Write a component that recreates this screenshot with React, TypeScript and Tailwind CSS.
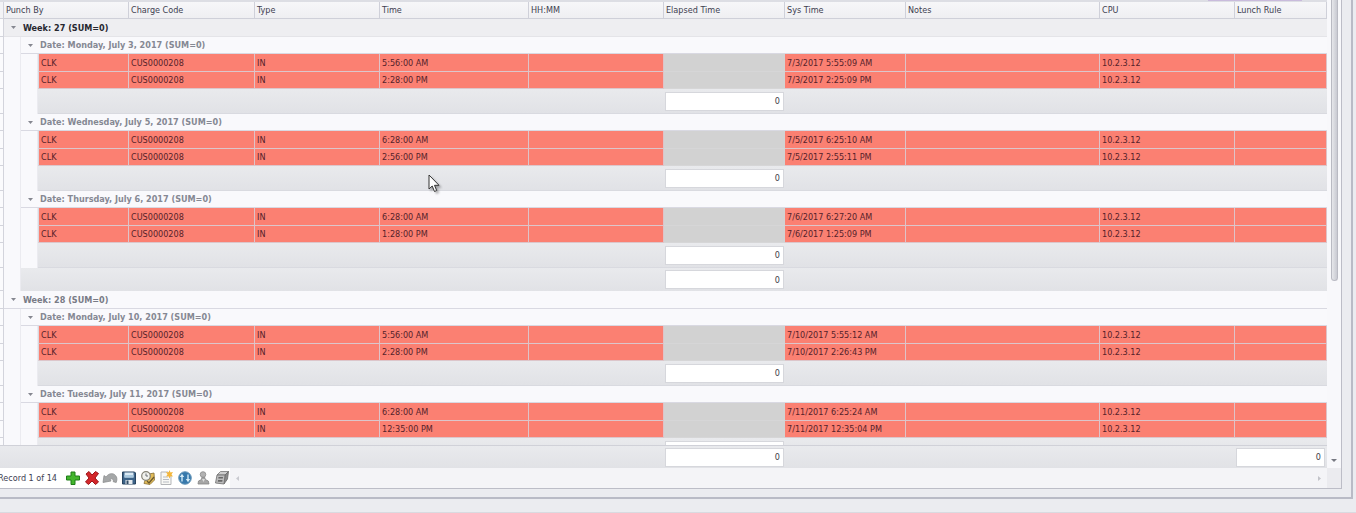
import { Fragment, type ReactNode } from "react";
import clsx from "clsx";

interface Punch {
  time: string;
  sysTime: string;
}

interface DayGroup {
  date: string;
  punches: Punch[];
}

interface WeekGroup {
  week: number;
  days: DayGroup[];
}

const WEEKS: WeekGroup[] = [
  {
    week: 27,
    days: [
      {
        date: "Monday, July 3, 2017",
        punches: [
          { time: "5:56:00 AM", sysTime: "7/3/2017 5:55:09 AM" },
          { time: "2:28:00 PM", sysTime: "7/3/2017 2:25:09 PM" },
        ],
      },
      {
        date: "Wednesday, July 5, 2017",
        punches: [
          { time: "6:28:00 AM", sysTime: "7/5/2017 6:25:10 AM" },
          { time: "2:56:00 PM", sysTime: "7/5/2017 2:55:11 PM" },
        ],
      },
      {
        date: "Thursday, July 6, 2017",
        punches: [
          { time: "6:28:00 AM", sysTime: "7/6/2017 6:27:20 AM" },
          { time: "1:28:00 PM", sysTime: "7/6/2017 1:25:09 PM" },
        ],
      },
    ],
  },
  {
    week: 28,
    days: [
      {
        date: "Monday, July 10, 2017",
        punches: [
          { time: "5:56:00 AM", sysTime: "7/10/2017 5:55:12 AM" },
          { time: "2:28:00 PM", sysTime: "7/10/2017 2:26:43 PM" },
        ],
      },
      {
        date: "Tuesday, July 11, 2017",
        punches: [
          { time: "6:28:00 AM", sysTime: "7/11/2017 6:25:24 AM" },
          { time: "12:35:00 PM", sysTime: "7/11/2017 12:35:04 PM" },
        ],
      },
    ],
  },
];

const HEADERS = [
  "Charge Code",
  "Type",
  "Time",
  "HH:MM",
  "Elapsed Time",
  "Sys Time",
  "Notes",
  "CPU",
  "Lunch Rule",
];

const TABLE = "w-full table-fixed border-separate border-spacing-0";
const BAR = "bg-linear-to-b from-[#e9eaed] to-[#e1e2e6]";

// Notes has no width, so it takes whatever the window leaves over
function Columns() {
  return (
    <colgroup>
      <col className="w-[4px]" />
      <col className="w-[17px]" />
      <col className="w-[17px]" />
      <col className="w-[91px]" />
      <col className="w-[126px]" />
      <col className="w-[125px]" />
      <col className="w-[149px]" />
      <col className="w-[135px]" />
      <col className="w-[121px]" />
      <col className="w-[121px]" />
      <col />
      <col className="w-[135px]" />
      <col className="w-[92px]" />
    </colgroup>
  );
}

function IndicatorCell() {
  return <td className="border-r border-b border-[#d3d4dc] bg-[#fbfbfd] p-0" />;
}

function IndentCell() {
  return <td className="border-r border-[#ebebf0] bg-[#f9f9fc] p-0" />;
}

function SumBox({ label }: { label: string }) {
  return (
    <input
      readOnly
      value="0"
      aria-label={label}
      className="block h-[19px] w-full border border-[#d6d7dc] bg-white pr-[3px] text-right text-[#3c3c48] outline-none"
    />
  );
}

function GroupTitle({ children }: { children: ReactNode }) {
  return (
    <button type="button" className="flex items-center whitespace-nowrap font-bold">
      <span className="flex w-[19px] justify-center pr-px">
        <svg viewBox="0 0 5 3" className="h-[3px] w-[5px]" fill="#858790">
          <path d="M0 0h5L2.5 3z" />
        </svg>
      </span>
      {children}
    </button>
  );
}

function PunchRow({ punch, first }: { punch: Punch; first: boolean }) {
  const cells = [
    "CLK",
    "CUS0000208",
    "IN",
    punch.time,
    "",
    null,
    punch.sysTime,
    "",
    "10.2.3.12",
    "",
  ];
  return (
    <tr className={first ? "h-[18px]" : "h-[17px]"}>
      <IndicatorCell />
      <IndentCell />
      <IndentCell />
      {cells.map((text, i) => (
        <td
          key={i}
          className={clsx(
            "overflow-hidden border-r border-b py-0 pr-0 pl-[2px] whitespace-nowrap text-[#55222a]",
            i === 0 && "border-l border-l-[#d9d9e0]",
            text === null
              ? "border-r-[#d3d3d3] border-b-[#d6d6d7] bg-[#d2d2d2]"
              : "border-r-[#dfc3c8] border-b-[#dcc6cb] bg-[#fb8072]",
          )}
        >
          {text}
        </td>
      ))}
    </tr>
  );
}

function WeekRows({ group, focused }: { group: WeekGroup; focused: boolean }) {
  return (
    <>
      <tr className="h-[18px]">
        <IndicatorCell />
        <td
          colSpan={12}
          className={clsx(
            "border-b p-0",
            focused
              ? "border-[#e4e4e8] bg-[#eeeef1] text-[#26272f]"
              : "border-[#d9d9e2] bg-[#f9f9fc] text-[#787b86]",
          )}
        >
          <GroupTitle>Week: {group.week} (SUM=0)</GroupTitle>
        </td>
      </tr>
      {group.days.map((day) => (
        <Fragment key={day.date}>
          <tr className="h-[17px]">
            <IndicatorCell />
            <IndentCell />
            <td
              colSpan={11}
              className="border-b border-[#d9d9e2] bg-[#f9f9fc] p-0 text-[#858893]"
            >
              <GroupTitle>Date: {day.date} (SUM=0)</GroupTitle>
            </td>
          </tr>
          {day.punches.map((punch, i) => (
            <PunchRow key={punch.sysTime} punch={punch} first={i === 0} />
          ))}
          <tr className="h-[25px]">
            <IndicatorCell />
            <IndentCell />
            <IndentCell />
            <td colSpan={5} className={clsx("border-b border-[#d9dae0] p-0", BAR)} />
            <td className={clsx("border-b border-[#d9dae0] py-0 pr-px pl-px", BAR)}>
              <SumBox label={`Elapsed time, ${day.date}`} />
            </td>
            <td colSpan={4} className={clsx("border-b border-[#d9dae0] p-0", BAR)} />
          </tr>
        </Fragment>
      ))}
      <tr className="h-[23px]">
        <IndicatorCell />
        <IndentCell />
        <td colSpan={6} className={clsx("p-0", BAR)} />
        <td className={clsx("px-px py-0", BAR)}>
          <SumBox label={`Elapsed time, week ${group.week}`} />
        </td>
        <td colSpan={4} className={clsx("p-0", BAR)} />
      </tr>
    </>
  );
}

const TOOLS: { name: string; art: ReactNode }[] = [
  {
    name: "Add",
    art: (
      <path
        d="M6 2h4v4h4.500v4H10v4.500H6V10H1.500V6H6z"
        fill="#43b52d"
        stroke="#1f7d19"
        strokeLinejoin="round"
      />
    ),
  },
  {
    name: "Delete",
    art: (
      <path
        d="M2 4l3-2.500 3 3.500 3.500-3.500L14.500 3.500 11 8l3.500 4-3 2.500L8 11l-3.500 3.500L1.500 12 5 8z"
        fill="#d3262a"
        stroke="#9c1519"
        strokeLinejoin="round"
      />
    ),
  },
  {
    name: "Undo",
    art: (
      <path
        d="M1 12.500l1-7 2 1.500C7 2.500 12.500 2.500 14.500 7c.6 1.600.5 3.500-.3 5.500l-3-.8c.6-2-.8-3.600-3.200-2.600l1 1.900z"
        fill="#a5a7a8"
        stroke="#858788"
        strokeWidth=".7"
      />
    ),
  },
  {
    name: "Save",
    art: (
      <>
        <path d="M1.500 2h12l1 1v11h-13z" fill="#3c6388" stroke="#27435f" />
        <path d="M3.500 2.500h9v5h-9z" fill="#dcebf5" />
        <path d="M3.500 5h9v2.500h-9z" fill="#a9c9df" />
        <path d="M4.500 10h7v4h-7z" fill="#e6ebef" />
        <path d="M5.500 10.500h2V14h-2z" fill="#334c66" />
      </>
    ),
  },
  {
    name: "Time clock",
    art: (
      <>
        <path d="M9 4l5-1 .5 7-4.500 4.500-6-1 1-3z" fill="#e2bc58" stroke="#866d32" strokeWidth=".8" />
        <circle cx="6" cy="6" r="4.300" fill="#f1f2ee" stroke="#858275" strokeWidth="1.200" />
        <path d="M6 3.500V6h2" fill="none" stroke="#6a6e75" />
        <path d="M7 11l2 2 5-6" fill="none" stroke="#68572e" strokeWidth="1.300" />
      </>
    ),
  },
  {
    name: "New note",
    art: (
      <>
        <path d="M3 2h7l3 3v9.500H3z" fill="#f8f8f5" stroke="#b3b5b8" />
        <path d="M5 7h5M5 9.500h6M5 12h6" stroke="#b9bdc4" />
        <path
          d="M11.500 0l1 2.500 2.500-.5-1.500 2.500L15 6.500l-2.500-.2-1 2.200-1-2.200-2.500.2 1.500-2L8 2l2.500.5z"
          fill="#f4b73c"
        />
      </>
    ),
  },
  {
    name: "Refresh",
    art: (
      <>
        <circle cx="8" cy="8" r="6.300" fill="#3779ac" stroke="#6c9abb" />
        <path d="M5 11.500V6M11 4.500V10" fill="none" stroke="#c6e2f2" strokeWidth="1.500" />
        <path d="M2.800 7L5 3.800 7.200 7zM8.800 9h4.400L11 12.200z" fill="#d7edf8" />
      </>
    ),
  },
  {
    name: "Employee",
    art: (
      <>
        <path d="M3 14l.5-3 3-1.500.3-2h3l.5 2 3 1.500.7 3z" fill="#a6a6a6" stroke="#858585" strokeWidth=".8" />
        <circle cx="8" cy="4.500" r="2.800" fill="#b3b3b3" stroke="#8c8c8c" strokeWidth=".8" />
        <path d="M7 9l1.500 3L10 9" fill="#dcdcdc" />
      </>
    ),
  },
  {
    name: "Print",
    art: (
      <>
        <path d="M3 5l3.500-3.500h8L11 5z" fill="#cfcfcf" stroke="#777" strokeWidth=".8" />
        <path d="M11 5l3.500-3.500L13.500 9 10 14z" fill="#8a8a8a" stroke="#6a6a6a" strokeWidth=".8" />
        <path d="M3 5h8l-1 9-8.500-1z" fill="#bdbdbd" stroke="#6d6d6d" strokeWidth=".8" />
        <path d="M4.500 7h4.500l-.2 1.500H4.300zM4 10h4.500l-.2 1.800H3.800z" fill="#686868" />
      </>
    ),
  },
];

function Navigator() {
  return (
    <div className="flex h-5 shrink-0 bg-[#f4f4f7]">
      <div className="flex items-center bg-white">
        <span className="flex w-[57px] justify-end overflow-hidden whitespace-nowrap text-[#404052]">
          Record 1 of 14
        </span>
        <div className="ml-2 flex w-[165px] justify-between">
          {TOOLS.map((tool) => (
            <button key={tool.name} type="button" aria-label={tool.name} className="size-4">
              <svg viewBox="0 0 16 16" className="size-4">
                {tool.art}
              </svg>
            </button>
          ))}
        </div>
      </div>
      <div className="flex flex-1 items-center justify-between px-[6px]">
        <svg viewBox="0 0 3 5" className="h-[5px] w-[3px]" fill="#c9cad0">
          <path d="M3 0v5L0 2.500z" />
        </svg>
        <svg viewBox="0 0 3 5" className="h-[5px] w-[3px]" fill="#c2c3c9">
          <path d="M0 0v5l3-2.500z" />
        </svg>
      </div>
    </div>
  );
}

export default function App() {
  return (
    <div className="relative flex h-screen flex-col overflow-hidden bg-[#ebecf0] font-['DejaVu_Sans_Condensed','DejaVu_Sans',sans-serif] text-[9px] leading-[12px]">
      <div className="mr-[3px] flex min-h-0 flex-1 flex-col border-r-2 border-b-2 border-[#b9bbc6] pr-[9px] pb-[8px]">
        <div className="flex min-h-0 flex-1 border-r border-b border-[#bcbdc7]">
          <div className="flex min-w-0 flex-1 flex-col">
            <div className="flex h-[2px] shrink-0 justify-end bg-[#dddee4] pr-[25px]">
              <span className="h-px w-[94px] bg-[#c9bbdc]" />
            </div>

            <div className="min-h-0 flex-1 overflow-hidden">
              <table className={TABLE}>
                <Columns />
                <thead>
                  <tr className="h-[17px] text-left text-[#404050]">
                    <td className="border-r border-b border-[#d3d4dc] bg-[#f3f3f6] p-0" />
                    <th
                      colSpan={3}
                      className="border-r border-b border-[#cfd0d9] bg-linear-to-b from-[#f7f7f9] to-[#efeff2] py-0 pr-0 pl-[2px] font-normal"
                    >
                      Punch By
                    </th>
                    {HEADERS.map((header) => (
                      <th
                        key={header}
                        className="border-r border-b border-[#cfd0d9] bg-linear-to-b from-[#f7f7f9] to-[#efeff2] py-0 pr-0 pl-[2px] font-normal whitespace-nowrap"
                      >
                        {header}
                      </th>
                    ))}
                  </tr>
                </thead>
                <tbody>
                  {WEEKS.map((group, i) => (
                    <WeekRows key={group.week} group={group} focused={i === 0} />
                  ))}
                </tbody>
              </table>
            </div>

            <table className={clsx(TABLE, "shrink-0")}>
              <Columns />
              <tbody>
                <tr className="h-[23px]">
                  <td colSpan={8} className={clsx("border-t border-[#d0d1d8] p-0", BAR)} />
                  <td className={clsx("border-t border-[#d0d1d8] px-px py-0", BAR)}>
                    <SumBox label="Total elapsed time" />
                  </td>
                  <td colSpan={3} className={clsx("border-t border-[#d0d1d8] p-0", BAR)} />
                  <td className={clsx("border-t border-[#d0d1d8] py-0 pr-[2px] pl-px", BAR)}>
                    <SumBox label="Total lunch rule" />
                  </td>
                </tr>
              </tbody>
            </table>

            <Navigator />
          </div>

          <div className="flex w-[14px] shrink-0 flex-col items-center bg-[#f8f8fb]">
            <div className="flex min-h-0 w-[7px] flex-1 flex-col">
              <div className="h-[62%] rounded-b-sm border-x border-b border-[#b9bac3] bg-linear-to-r from-[#e6e7eb] to-[#c9cad2]" />
            </div>
            <div className="flex h-[15px] items-center">
              <svg viewBox="0 0 6 3" className="h-[3px] w-[6px]" fill="#777982">
                <path d="M0 0h6L3 3z" />
              </svg>
            </div>
            <div className="h-5 w-full bg-[#ebebef]" />
          </div>
        </div>
      </div>
      <div className="h-[14px] shrink-0 border-b border-[#d9dae0]" />

      <svg
        viewBox="0 0 12 19"
        className="pointer-events-none absolute top-[174px] left-[428px] h-[19px] w-[12px] drop-shadow-[2px_2px_1px_rgba(0,0,0,0.3)]"
      >
        <path
          d="M1 1v14l3.200-3 2.300 5.500 2.200-1L6.500 11.300H11z"
          fill="#fff"
          stroke="#333"
          strokeLinejoin="round"
        />
      </svg>
    </div>
  );
}
